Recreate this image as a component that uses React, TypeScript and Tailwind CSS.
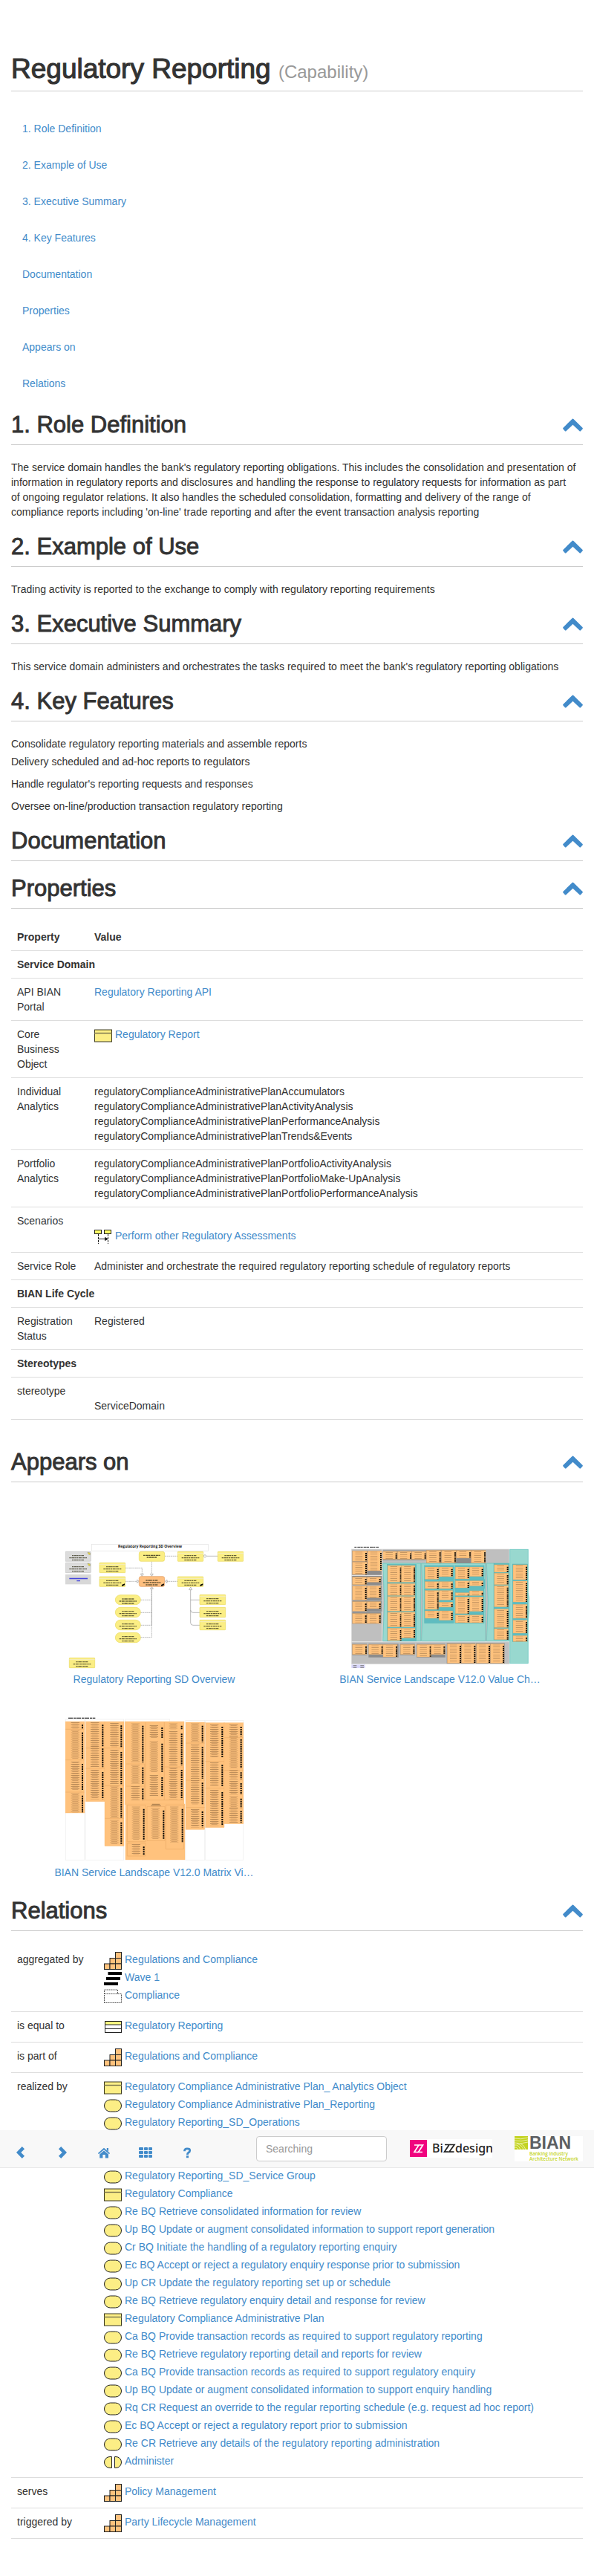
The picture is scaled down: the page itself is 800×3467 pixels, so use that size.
import React from "react";

type IconName = "object" | "scenario" | "capability" | "plateau" | "group" | "table" | "service" | "function";

function Icon({ name }: { name: IconName }) {
  return (
    <svg viewBox="0 0 24 24" className="h-6 w-6 shrink-0" aria-hidden="true">
      {name === "object" && (
        <g stroke="#3d3a20">
          <rect x="0.5" y="4" width="23" height="16" fill="#fcee85" />
          <line x1="0" y1="8.5" x2="24" y2="8.5" strokeWidth="1.4" stroke="#77724c" />
        </g>
      )}
      {name === "service" && <rect x="0.5" y="4" width="23" height="16" rx="8" fill="#fcee85" stroke="#222" />}
      {name === "function" && (
        <g fill="#fcee85" stroke="#222">
          <path d="M10.500 4.500H8A7.500 7.500 0 0 0 8 19.500H10.500Z" />
          <path d="M14.500 4.500H16A7.500 7.500 0 0 1 16 19.500H14.500Z" />
        </g>
      )}
      {name === "capability" && (
        <g fill="#ffc27d" stroke="#222">
          <rect x="15.500" y="0.500" width="8" height="8" />
          <rect x="8" y="8.500" width="7.500" height="7.500" />
          <rect x="15.500" y="8.500" width="8" height="7.500" />
          <rect x="0.500" y="16" width="7.500" height="7.500" />
          <rect x="8" y="16" width="7.500" height="7.500" />
          <rect x="15.500" y="16" width="8" height="7.500" />
        </g>
      )}
      {name === "plateau" && (
        <g fill="#000">
          <rect x="5.500" y="3" width="18.500" height="4" />
          <rect x="3" y="10" width="19" height="4" />
          <rect x="0" y="17" width="19" height="4" />
        </g>
      )}
      {name === "group" && (
        <g fill="none" stroke="#555" strokeDasharray="2 1">
          <path d="M0.500 21V3H18.500V8.500" />
          <path d="M0.500 8.500H23.500V20.500H0.500" />
        </g>
      )}
      {name === "table" && (
        <g stroke="#222" fill="#fff">
          <rect x="1.500" y="4.500" width="22" height="15" />
          <rect x="1.500" y="4.500" width="22" height="4.500" fill="#ffff80" />
          <path d="M1 14.500H24" />
        </g>
      )}
      {name === "scenario" && (
        <g stroke="#222" fill="#ffff66">
          <rect x="0.500" y="2.500" width="9" height="5" />
          <rect x="13.500" y="2.500" width="9" height="5" />
          <path d="M5.500 8V21M18.500 8V21" strokeDasharray="3 1" fill="none" />
          <path d="M5.500 14.500H15" fill="none" />
          <path d="M14.500 12.500L18 14.500L14.500 16.500Z" fill="#222" />
        </g>
      )}
    </svg>
  );
}

function IconLink({ icon, text }: { icon: IconName; text: string }) {
  return (
    <div className="flex h-6 items-start gap-1">
      <Icon name={icon} />
      <a href="#" className="text-[#428bca]">
        {text}
      </a>
    </div>
  );
}

function SectionHeader({ id, title }: { id: string; title: string }) {
  return (
    <div id={id} className="mb-5 flex h-11 items-start justify-between border-b border-[#ccc]">
      <h2 className="text-[31px] leading-[34px] [-webkit-text-stroke:0.03em]">{title}</h2>
      <a href="#top" aria-label="Back to top" className="pt-2">
        <svg viewBox="0 0 27 18" className="h-[18px] w-[27px]" aria-hidden="true">
          <path
            d="M12.300 1.200Q13.500 0 14.700 1.200L26.400 12.700Q27.300 13.600 26.500 14.500L24.300 16.900Q23.300 17.900 22.300 16.900L13.500 8.800L4.700 16.900Q3.700 17.900 2.700 16.900L0.500 14.500Q-0.300 13.600 0.600 12.700Z"
            fill="#428bca"
          />
        </svg>
      </a>
    </div>
  );
}

const sections = [
  ["role", "1. Role Definition"],
  ["example", "2. Example of Use"],
  ["summary", "3. Executive Summary"],
  ["features", "4. Key Features"],
  ["documentation", "Documentation"],
  ["properties", "Properties"],
  ["appears", "Appears on"],
  ["relations", "Relations"],
];

function GroupRow({ title }: { title: string }) {
  return (
    <tr className="border-b border-[#ddd]">
      <th colSpan={2} className="p-2 text-left font-bold">
        {title}
      </th>
    </tr>
  );
}

function PropertyRow({ name, children }: { name: string; children: React.ReactNode }) {
  return (
    <tr className="border-b border-[#ddd] align-top">
      <td className="p-2">{name}</td>
      <td className="p-2">{children}</td>
    </tr>
  );
}

type Box = [number, number, number, number];

function ModelBox({ box, kind = "object" }: { box: Box; kind?: "object" | "service" | "note" | "main" }) {
  const [x, y, w, h] = box;
  const fill = kind === "note" ? "#dcdcdc" : kind === "main" ? "#ffc080" : "#fbee84";
  const stroke = kind === "note" ? "#c4c4c4" : kind === "main" ? "#e09c60" : "#e8da5c";
  const radius = kind === "service" ? 20 : kind === "main" ? 8 : 2;
  return (
    <g>
      <rect x={x} y={y} width={w} height={h} rx={radius} fill={fill} stroke={stroke} strokeWidth="2" />
      {kind === "object" && <path d={`M${x} ${y + 7}h${w}`} stroke="#f3ecc0" strokeWidth="3" />}
      <g stroke="#35331c" strokeWidth="4" opacity="0.75" strokeDasharray="7 2 11 1 5 2">
        <path d={`M${x + 27} ${y + 16}h${w - 54}`} />
        <path d={`M${x + 16} ${y + 25}h${w - 32}`} />
        <path d={`M${x + 27} ${y + 34}h${w - 54}`} />
      </g>
    </g>
  );
}

function OverviewDiagram() {
  const objects: Box[] = [
    [538, 85, 103, 39],
    [700, 85, 103, 39],
    [222, 130, 104, 40],
    [222, 186, 104, 40],
    [538, 186, 103, 40],
    [627, 259, 104, 40],
    [627, 310, 104, 40],
    [627, 361, 104, 40],
    [100, 514, 103, 40],
  ];
  const services: Box[] = [
    [286, 260, 102, 39],
    [286, 310, 102, 40],
    [286, 361, 102, 40],
    [286, 412, 102, 40],
  ];
  return (
    <svg viewBox="84 54 720 504" className="mb-1 h-[168px] w-60" role="img" aria-label="Regulatory Reporting SD Overview">
      <rect x="190" y="55" width="471" height="27" fill="#fff" stroke="#e2e2e2" strokeWidth="2" />
      <text x="426" y="70" textAnchor="middle" fontSize="15" fontWeight="bold" fontFamily="Open Sans" fill="#111">
        Regulatory Reporting SD Overview
      </text>
      <g fill="none" stroke="#999" strokeWidth="2">
        <path
          d="M486 103H538M433 125V176M326 151H394V176M326 205H374M494 205H538M388 280H433V234M388 331H433M388 382H433M388 431H433V280"
          strokeDasharray="6 2"
        />
        <path d="M433 234V382M655 103H700M590 240V372Q590 382 600 382H627M590 321Q590 331 600 331H627M590 280H627" />
        <path
          d="M388 175H400L394 184ZM427 175H439L433 184ZM427 235H439L433 226ZM374 199V211L382 205ZM495 199V211L487 205ZM584 239H596L590 228Z"
          fill="#fff"
        />
        <circle cx="648" cy="103" r="5" fill="#fff" />
      </g>
      {objects.map((b, i) => (
        <ModelBox key={i} box={b} />
      ))}
      {services.map((b, i) => (
        <ModelBox key={i} box={b} kind="service" />
      ))}
      <rect x="382" y="85" width="103" height="39" rx="8" fill="#fbee84" stroke="#e8da5c" strokeWidth="2" />
      <path d="M399 100h68M413 108h40" stroke="#55512c" strokeWidth="4" strokeDasharray="7 2 11 1" />
      <ModelBox box={[382, 185, 103, 41]} kind="main" />
      <ModelBox box={[84, 85, 103, 39]} kind="note" />
      <ModelBox box={[84, 130, 103, 40]} kind="note" />
      <rect x="84" y="177" width="104" height="40" fill="#d8d8d8" />
      <path d="M100 193h74M130 203h14" stroke="#4646dd" strokeWidth="4" />
      <path d="M100 197h74" stroke="#4646dd" strokeWidth="1" />
      <path d="M174 87l10 3v8l-7-3ZM174 132l10 3v8l-7-3Z" fill="#efe040" stroke="#666" />
      <g fill="#000">
        <path d="M312 219l12-5v6l-11 5ZM471 219l12-5v6l-11 5ZM628 219l12-5v6l-11 5Z" />
      </g>
    </svg>
  );
}

function LandscapeCell({ box }: { box: Box }) {
  const [x, y, w, h] = box;
  return (
    <g>
      <rect x={x} y={y} width={w} height={h} fill="#ffc27d" stroke="#d99f62" />
      <path d={`M${x + w / 2 - 3} ${y + 4}V${y + h - 2}`} stroke="#b5895a" strokeWidth={w * 0.5} strokeDasharray="2 6" />
      <path d={`M${x + w - 3} ${y + 8}V${y + h}`} stroke="#000" strokeWidth="6" strokeDasharray="5 3" />
    </g>
  );
}

const greyPanels: Box[] = [
  [101, 81, 119, 98], [101, 183, 120, 36], [101, 221, 120, 60], [101, 283, 120, 44], [101, 329, 118, 47],
  [225, 80, 175, 40], [400, 78, 240, 54], [101, 457, 60, 46], [167, 457, 121, 55], [294, 457, 60, 46],
  [361, 457, 116, 55], [483, 454, 116, 83], [601, 454, 116, 83],
];

const tealPanels: Box[] = [
  [242, 136, 118, 310], [393, 141, 118, 57], [393, 200, 118, 36], [393, 238, 118, 82], [393, 321, 118, 53],
  [516, 141, 118, 55], [516, 197, 120, 37], [516, 236, 118, 27], [516, 264, 118, 71], [516, 336, 118, 38],
  [673, 133, 62, 308], [749, 135, 61, 314],
];

const landscapeCells: Box[] = [
  [102, 82, 58, 42], [102, 127, 58, 50], [163, 82, 57, 80],
  [102, 188, 57, 30], [161, 188, 55, 20], [102, 223, 57, 57], [161, 223, 55, 48],
  [102, 287, 57, 38], [161, 287, 55, 28], [102, 335, 57, 40], [161, 335, 55, 40],
  [225, 84, 57, 32], [284, 84, 56, 32], [342, 84, 57, 32], [401, 80, 58, 50], [462, 80, 58, 50], [522, 80, 58, 31], [582, 80, 58, 50],
  [244, 141, 56, 67], [300, 141, 55, 67], [244, 214, 56, 48], [300, 214, 55, 48], [244, 266, 56, 59], [300, 266, 55, 59],
  [244, 330, 56, 59], [300, 330, 55, 59], [244, 394, 56, 50], [300, 394, 55, 40],
  [395, 147, 55, 49], [452, 147, 55, 39], [395, 206, 55, 28], [452, 206, 55, 28], [395, 242, 55, 76], [452, 242, 55, 38],
  [452, 289, 55, 20], [395, 324, 55, 30], [452, 324, 55, 38],
  [518, 147, 55, 48], [575, 147, 55, 38], [518, 203, 55, 28], [575, 203, 55, 20], [518, 251, 55, 11], [575, 243, 55, 19],
  [518, 268, 55, 67], [575, 268, 55, 58], [518, 341, 55, 31], [575, 341, 55, 31],
  [675, 138, 57, 30], [675, 172, 57, 46], [675, 222, 57, 86], [675, 317, 57, 74], [675, 396, 57, 44],
  [751, 138, 57, 60], [751, 204, 57, 84], [751, 298, 57, 56], [751, 362, 57, 52], [751, 424, 57, 24],
  [102, 460, 58, 40], [168, 460, 57, 40], [226, 460, 57, 50], [296, 460, 57, 40], [363, 460, 57, 50], [420, 460, 56, 40],
  [485, 457, 56, 78], [543, 457, 56, 78], [603, 457, 55, 78], [660, 457, 55, 78],
];

function ValueChainDiagram() {
  return (
    <svg viewBox="97 54 720 504" className="mb-1 h-[168px] w-60" role="img" aria-label="BIAN Service Landscape V12.0 Value Chain">
      <path d="M110 67H208" stroke="#333" strokeWidth="3" strokeDasharray="9 3 12 1" />
      <rect x="98" y="75" width="638" height="464" fill="#bfbfbf" stroke="#ddd" strokeWidth="2" />
      <path d="M98 449H736M98 181H222M222 75V449" stroke="#e8e8e8" strokeWidth="3" />
      <g fill="#98d8cf" stroke="#5fc4bd" strokeWidth="2">
        <path d="M738 76H812V250L818 290L812 370V536H738Z" />
        <path d="M225 132H378V446H225L231 290Z" />
        <path d="M381 132H639V446H381L387 290Z" />
        <path d="M644 132H735V446H644L650 290Z" />
      </g>
      <g fill="#8c8c8c">
        {greyPanels.map(([x, y, w, h], i) => (
          <rect key={i} x={x} y={y} width={w} height={h} />
        ))}
      </g>
      <g fill="#5fbcc0" stroke="#45aeb0">
        {tealPanels.map(([x, y, w, h], i) => (
          <rect key={i} x={x} y={y} width={w} height={h} />
        ))}
      </g>
      {landscapeCells.map((b, i) => (
        <LandscapeCell key={i} box={b} />
      ))}
      <rect x="98" y="541" width="55" height="14" fill="#d8d6fa" />
      <path d="M112 544V554M141 544V554" stroke="#777" strokeWidth="14" strokeDasharray="2 2" />
    </svg>
  );
}

const matrixBlocks: Box[] = [
  [84, 81, 78, 369], [166, 81, 77, 323], [243, 81, 78, 503], [325, 81, 239, 335],
  [327, 414, 240, 225], [570, 84, 77, 433], [650, 86, 76, 423], [726, 86, 78, 408],
];

/* centre of the labels, left edge of the markers, then start and end of each run */
const matrixRuns: [number, number, number, number][] = [
  [124, 150, 94, 112], [124, 150, 125, 232], [124, 150, 252, 360], [124, 150, 380, 448],
  [203, 232, 94, 182], [203, 232, 190, 265], [203, 232, 285, 394],
  [282, 307, 97, 184], [282, 307, 204, 334], [282, 307, 350, 470], [282, 307, 488, 576],
  [367, 394, 98, 246], [367, 394, 266, 332], [367, 394, 352, 398],
  [442, 472, 105, 150], [442, 472, 170, 286], [442, 472, 306, 382],
  [520, 551, 98, 112], [520, 551, 130, 258], [520, 551, 276, 394],
  [370, 398, 434, 558], [370, 398, 586, 620], [448, 478, 440, 554], [524, 554, 434, 570],
  [608, 635, 98, 164], [608, 635, 184, 312], [608, 635, 328, 416], [608, 635, 444, 508],
  [686, 715, 102, 228], [686, 715, 256, 342], [686, 715, 366, 502],
  [764, 791, 102, 140], [764, 791, 152, 270], [764, 791, 286, 314], [764, 791, 330, 376], [764, 791, 392, 430], [764, 791, 442, 490],
];

function MatrixDiagram() {
  return (
    <svg viewBox="84 54 720 594" className="mb-1 h-[198px] w-60" role="img" aria-label="BIAN Service Landscape V12.0 Matrix View">
      <path d="M96 67H205" stroke="#222" strokeWidth="4" strokeDasharray="18 3 10 2" />
      <g stroke="#aaa" strokeWidth="2">
        <path d="M86 76H108M168 76H190M326 76H352M571 79H594M652 79H674" />
      </g>
      <g fill="#fff" stroke="#eee" strokeWidth="2">
        <rect x="85" y="72" width="76" height="568" />
        <rect x="166" y="72" width="154" height="568" />
        <rect x="326" y="72" width="180" height="20" />
        <rect x="570" y="76" width="77" height="564" />
        <rect x="650" y="76" width="153" height="564" />
      </g>
      <g fill="#ffc27d" stroke="#f9b76e">
        {matrixBlocks.map(([x, y, w, h], i) => (
          <rect key={i} x={x} y={y} width={w} height={h} />
        ))}
      </g>
      <g fill="none" stroke="#ecac68" strokeWidth="2">
        <path d="M84 112H161M84 236H161M84 366H161M166 188H320M166 270H243M243 340H320M243 472H320M330 252H404V400M330 342H404M408 84V398H484M484 84V398H560V264H484M570 168H647M570 318H647M570 428H647M650 242H726M650 350H726M726 146H803M726 278H803M334 418H408V566H334ZM414 424H486V562H414ZM490 418H562V596H490ZM334 572H408V624H334Z" />
      </g>
      {matrixRuns.map(([cx, ix, y1, y2], i) => (
        <g key={i}>
          <path d={`M${cx} ${y1 - 9}V${y2}`} stroke="#705030" strokeWidth="34" strokeDasharray="2 7" opacity="0.6" />
          <path d={`M${cx} ${y1 - 5}V${y2}`} stroke="#8a6238" strokeWidth="24" strokeDasharray="2 7" opacity="0.45" />
          <path d={`M${ix + 3} ${y1}V${y2}`} stroke="#000" strokeWidth="6" strokeDasharray="6 3" />
        </g>
      ))}
      <path d="M434 415H466M430 421H470" stroke="#705030" strokeWidth="2" />
    </svg>
  );
}

function Thumb({ caption, children }: { caption: string; children: React.ReactNode }) {
  return (
    <a href="#" className="flex h-65 w-1/2 flex-col items-center justify-end pb-[5px] text-[#428bca]">
      {children}
      <span>{caption}</span>
    </a>
  );
}

const realizedBefore: [IconName, string][] = [
  ["object", "Regulatory Compliance Administrative Plan_ Analytics Object"],
  ["service", "Regulatory Compliance Administrative Plan_Reporting"],
  ["service", "Regulatory Reporting_SD_Operations"],
];

const realizedAfter: [IconName, string][] = [
  ["service", "Regulatory Reporting_SD_Service Group"],
  ["object", "Regulatory Compliance"],
  ["service", "Re BQ Retrieve consolidated information for review"],
  ["service", "Up BQ Update or augment consolidated information to support report generation"],
  ["service", "Cr BQ Initiate the handling of a regulatory reporting enquiry"],
  ["service", "Ec BQ Accept or reject a regulatory enquiry response prior to submission"],
  ["service", "Up CR Update the regulatory reporting set up or schedule"],
  ["service", "Re BQ Retrieve regulatory enquiry detail and response for review"],
  ["object", "Regulatory Compliance Administrative Plan"],
  ["service", "Ca BQ Provide transaction records as required to support regulatory reporting"],
  ["service", "Re BQ Retrieve regulatory reporting detail and reports for review"],
  ["service", "Ca BQ Provide transaction records as required to support regulatory enquiry"],
  ["service", "Up BQ Update or augment consolidated information to support enquiry handling"],
  ["service", "Rq CR Request an override to the regular reporting schedule (e.g. request ad hoc report)"],
  ["service", "Ec BQ Accept or reject a regulatory report prior to submission"],
  ["service", "Re CR Retrieve any details of the regulatory reporting administration"],
  ["function", "Administer"],
];

function RelationRow({ name, children }: { name: string; children: React.ReactNode }) {
  return (
    <tr className="border-b border-[#ddd] align-top">
      <td className="p-2">{name}</td>
      <td className="p-2">{children}</td>
    </tr>
  );
}

function NavButton({ label, children }: { label: string; children: React.ReactNode }) {
  return (
    <button type="button" aria-label={label} className="flex h-[50px] w-14 items-center justify-center pt-[9px] text-[#428bca]">
      {children}
    </button>
  );
}

function Toolbar() {
  return (
    <nav className="absolute inset-x-0 top-[2867px] flex h-[51px] items-start border-b border-[#e7e7e7] bg-[#f8f8f8] pr-[15px]">
      <NavButton label="Back">
        <svg viewBox="0 0 18 18" className="h-[18px] w-[18px]" aria-hidden="true">
          <path d="M12.400 2.600L6.200 9L12.400 15.400" fill="none" stroke="currentColor" strokeWidth="4.600" />
        </svg>
      </NavButton>
      <NavButton label="Forward">
        <svg viewBox="0 0 18 18" className="h-[18px] w-[18px]" aria-hidden="true">
          <path d="M5.600 2.600L11.800 9L5.600 15.400" fill="none" stroke="currentColor" strokeWidth="4.600" />
        </svg>
      </NavButton>
      <NavButton label="Home">
        <svg viewBox="0 0 18 18" className="h-[18px] w-[18px]" aria-hidden="true">
          <path d="M1.500 10.600L9 4L16.500 10.600" fill="none" stroke="currentColor" strokeWidth="1.800" />
          <path d="M12.800 3H15V8L12.800 6Z" fill="currentColor" />
          <path d="M9 6.400L15 11.600V16.500H10.800V12H7.400V16.500H3.200V11.600Z" fill="currentColor" />
        </svg>
      </NavButton>
      <NavButton label="Overview">
        <svg viewBox="0 0 20 18" className="h-[18px] w-5" aria-hidden="true">
          <g fill="currentColor">
            {[2, 7, 12].map((y) =>
              [1, 8, 14].map((x) => <rect key={`${x}-${y}`} x={x} y={y} width={x === 1 ? 6 : 5} height="4" rx="1" />),
            )}
          </g>
        </svg>
      </NavButton>
      <NavButton label="Help">
        <svg viewBox="0 0 18 18" className="h-[18px] w-[18px]" aria-hidden="true">
          <path
            d="M5.500 7.200Q5.400 3.800 9 3.800Q12.700 3.800 12.700 6.600Q12.700 8.200 10.800 9.200Q9.400 10 9.400 12"
            fill="none"
            stroke="currentColor"
            strokeWidth="2.800"
          />
          <rect x="7.900" y="13.200" width="3.100" height="3" fill="currentColor" />
        </svg>
      </NavButton>
      <input
        type="text"
        aria-label="Search"
        placeholder="Searching"
        className="mt-2 ml-[65px] h-[34px] w-44 rounded border border-[#ccc] bg-white px-3 text-[14px] text-[#555] placeholder:text-[#999]"
      />
      <a href="#" aria-label="BiZZdesign" className="mt-3 ml-auto">
        <svg viewBox="0 0 111 25" className="h-[25px] w-[111px]" aria-hidden="true">
          <rect width="111" height="25" fill="#fff" />
          <rect y="1" width="23" height="23" fill="#f0047f" />
          <g fill="none" stroke="#fff" strokeWidth="1.700">
            <path d="M6 8H12L6 17.500H11.500" />
            <path d="M12.500 8H17.500L11.500 17.500H17" />
          </g>
          <g fontFamily="Noto Sans" fontWeight="500" fontSize="16" fill="#222">
            <text x="30" y="18">Bi</text>
            <text x="61" y="18">design</text>
          </g>
          <g fill="none" stroke="#222" strokeWidth="1.700">
            <path d="M47 7.500H53L46.500 17.200H52" />
            <path d="M54 7.500H60L53 17.200H59.500" />
          </g>
        </svg>
      </a>
      <a href="#" aria-label="BIAN Banking Industry Architecture Network" className="mt-2 ml-[30px]">
        <svg viewBox="0 0 92 34" className="h-[34px] w-[92px]" aria-hidden="true">
          <rect width="92" height="34" fill="#fff" />
          <rect width="18" height="18" fill="#c3d321" />
          <g fill="none" stroke="#eef3b4" strokeWidth="0.900">
            <path d="M0 3Q8 5 18 2M0 6Q9 8 18 5M0 9Q9 11 18 8M0 12Q5 11 8 18M0 15Q3 14 5 18M3 10Q10 12 12 18M8 10Q13 12 15 18" />
          </g>
          <text x="20" y="17" fontFamily="Liberation Sans" fontWeight="bold" fontSize="23" fill="#5d6063">BIAN</text>
          <g fontFamily="Open Sans" fontWeight="600" fontSize="6.300" fill="#c3d321">
            <text x="20" y="26">Banking Industry</text>
            <text x="20" y="32.500">Architecture Network</text>
          </g>
        </svg>
      </a>
    </nav>
  );
}

export default function App() {
  return (
    <div
      id="top"
      className="relative bg-white px-[15px] pt-[73px] pb-[50px] font-['Liberation_Sans',Arial,sans-serif] text-[14px] leading-5 text-[#333]"
    >
      <header className="mb-[25px] border-b border-[#ccc] pb-[9px]">
        <h1 className="text-[37px] leading-10 [-webkit-text-stroke:0.03em]">
          Regulatory Reporting{" "}
          <small className="text-[24px] leading-none text-[#999] [-webkit-text-stroke:0]">(Capability)</small>
        </h1>
      </header>

      <ul className="mb-[15px]">
        {sections.map(([id, title]) => (
          <li key={id} className="flex h-[49px] items-center px-[15px]">
            <a href={`#${id}`} className="text-[#428bca]">
              {title}
            </a>
          </li>
        ))}
      </ul>

      <SectionHeader id="role" title="1. Role Definition" />
      <p className="mb-5">
        The service domain handles the bank's regulatory reporting obligations. This includes the consolidation and presentation of
        information in regulatory reports and disclosures and handling the response to regulatory requests for information as part
        <br />
        of ongoing regulator relations. It also handles the scheduled consolidation, formatting and delivery of the range of
        <br />
        compliance reports including 'on-line' trade reporting and after the event transaction analysis reporting
      </p>

      <SectionHeader id="example" title="2. Example of Use" />
      <p className="mb-5">Trading activity is reported to the exchange to comply with regulatory reporting requirements</p>

      <SectionHeader id="summary" title="3. Executive Summary" />
      <p className="mb-5">
        This service domain administers and orchestrates the tasks required to meet the bank's regulatory reporting obligations
      </p>

      <SectionHeader id="features" title="4. Key Features" />
      <p className="mb-1">Consolidate regulatory reporting materials and assemble reports</p>
      <p className="mb-[10px]">Delivery scheduled and ad-hoc reports to regulators</p>
      <p className="mb-[10px]">Handle regulator's reporting requests and responses</p>
      <p className="mb-5">Oversee on-line/production transaction regulatory reporting</p>

      <SectionHeader id="documentation" title="Documentation" />
      <SectionHeader id="properties" title="Properties" />
      <table className="mb-10 w-full table-fixed border-collapse">
        <colgroup>
          <col className="w-[104px]" />
          <col />
        </colgroup>
        <thead>
          <tr className="border-b border-[#ddd] text-left">
            <th className="p-2 font-bold">Property</th>
            <th className="p-2 font-bold">Value</th>
          </tr>
        </thead>
        <tbody>
          <GroupRow title="Service Domain" />
          <PropertyRow name="API BIAN Portal">
            <a href="#" className="text-[#428bca]">
              Regulatory Reporting API
            </a>
          </PropertyRow>
          <PropertyRow name="Core Business Object">
            <IconLink icon="object" text="Regulatory Report" />
          </PropertyRow>
          <PropertyRow name="Individual Analytics">
            <div>regulatoryComplianceAdministrativePlanAccumulators</div>
            <div>regulatoryComplianceAdministrativePlanActivityAnalysis</div>
            <div>regulatoryComplianceAdministrativePlanPerformanceAnalysis</div>
            <div>regulatoryComplianceAdministrativePlanTrends&amp;Events</div>
          </PropertyRow>
          <PropertyRow name="Portfolio Analytics">
            <div>regulatoryComplianceAdministrativePlanPortfolioActivityAnalysis</div>
            <div>regulatoryComplianceAdministrativePlanPortfolioMake-UpAnalysis</div>
            <div>regulatoryComplianceAdministrativePlanPortfolioPerformanceAnalysis</div>
          </PropertyRow>
          <PropertyRow name="Scenarios">
            <div className="pt-5">
              <IconLink icon="scenario" text="Perform other Regulatory Assessments" />
            </div>
          </PropertyRow>
          <PropertyRow name="Service Role">
            Administer and orchestrate the required regulatory reporting schedule of regulatory reports
          </PropertyRow>
          <GroupRow title="BIAN Life Cycle" />
          <PropertyRow name="Registration Status">Registered</PropertyRow>
          <GroupRow title="Stereotypes" />
          <PropertyRow name="stereotype">
            <div className="pt-5">ServiceDomain</div>
          </PropertyRow>
        </tbody>
      </table>

      <SectionHeader id="appears" title="Appears on" />
      <div className="mb-5 flex flex-wrap">
        <Thumb caption="Regulatory Reporting SD Overview">
          <OverviewDiagram />
        </Thumb>
        <Thumb caption="BIAN Service Landscape V12.0 Value Ch…">
          <ValueChainDiagram />
        </Thumb>
        <Thumb caption="BIAN Service Landscape V12.0 Matrix Vi…">
          <MatrixDiagram />
        </Thumb>
      </div>

      <SectionHeader id="relations" title="Relations" />
      <table className="w-full table-fixed border-collapse">
        <colgroup>
          <col className="w-[117px]" />
          <col />
        </colgroup>
        <tbody>
          <RelationRow name="aggregated by">
            <IconLink icon="capability" text="Regulations and Compliance" />
            <IconLink icon="plateau" text="Wave 1" />
            <IconLink icon="group" text="Compliance" />
          </RelationRow>
          <RelationRow name="is equal to">
            <IconLink icon="table" text="Regulatory Reporting" />
          </RelationRow>
          <RelationRow name="is part of">
            <IconLink icon="capability" text="Regulations and Compliance" />
          </RelationRow>
          <RelationRow name="realized by">
            <div className="mb-12">
              {realizedBefore.map(([icon, text]) => (
                <IconLink key={text} icon={icon} text={text} />
              ))}
            </div>
            {realizedAfter.map(([icon, text]) => (
              <IconLink key={text} icon={icon} text={text} />
            ))}
          </RelationRow>
          <RelationRow name="serves">
            <IconLink icon="capability" text="Policy Management" />
          </RelationRow>
          <RelationRow name="triggered by">
            <IconLink icon="capability" text="Party Lifecycle Management" />
          </RelationRow>
        </tbody>
      </table>

      <Toolbar />
    </div>
  );
}
